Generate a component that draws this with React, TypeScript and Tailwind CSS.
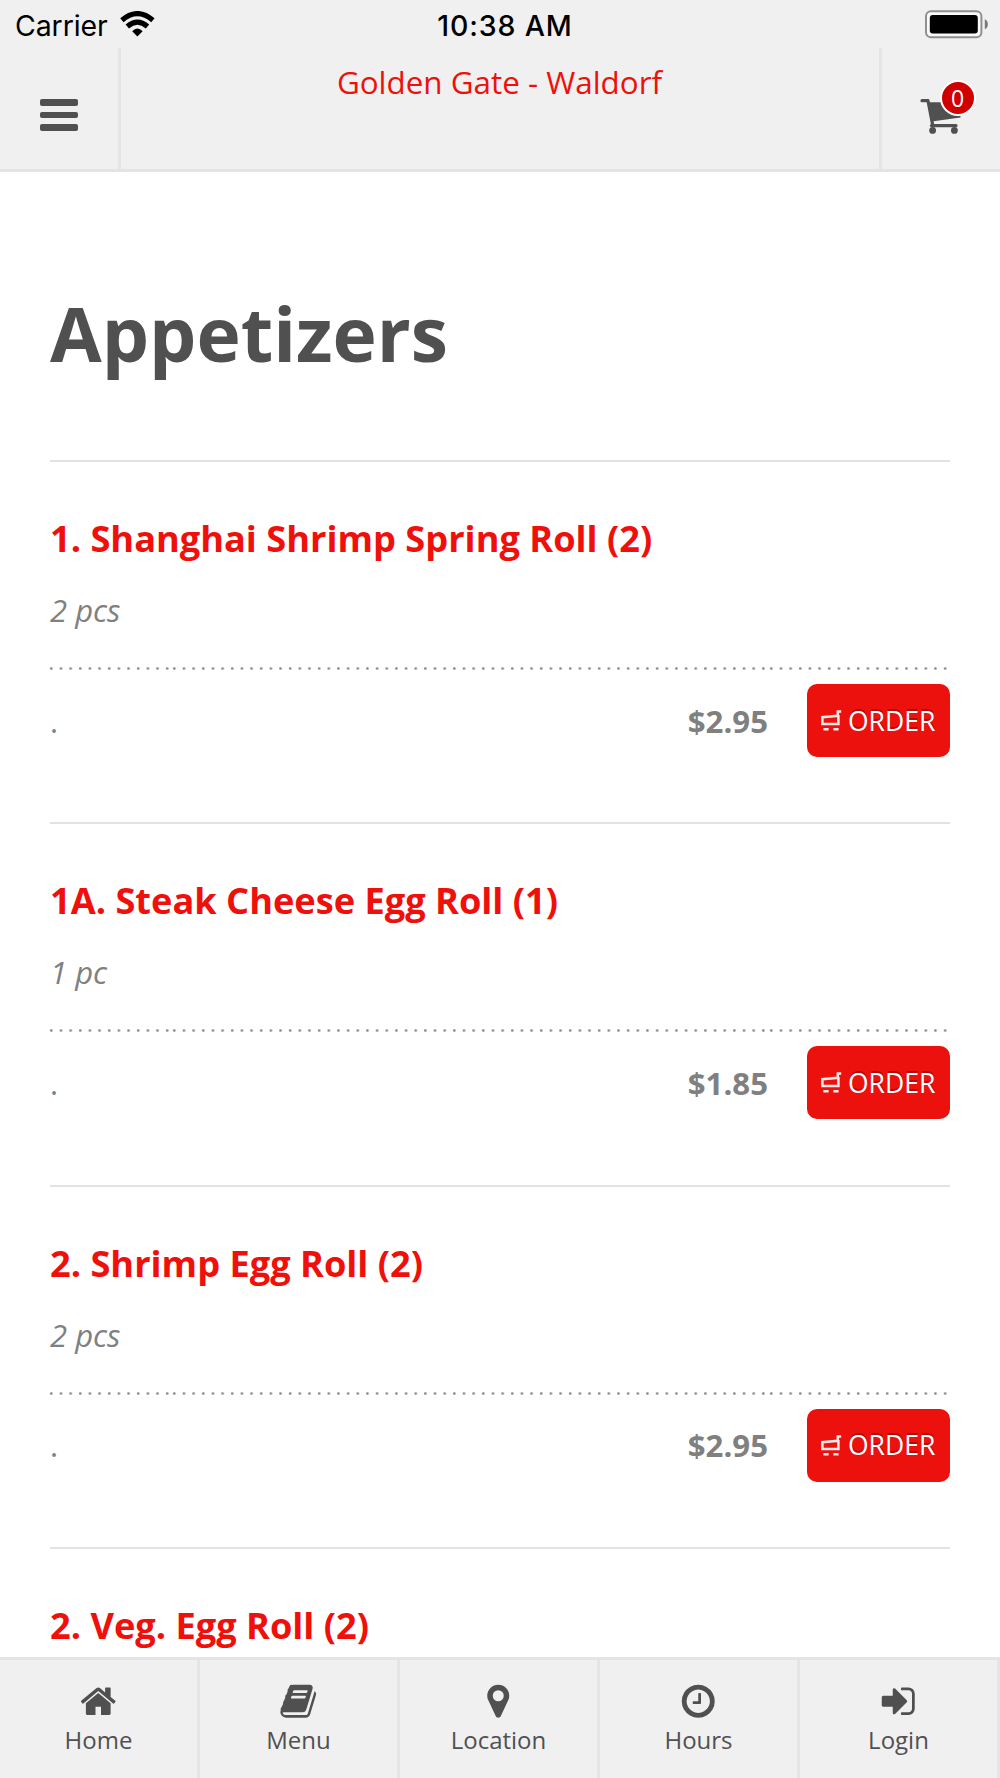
import React from "react";

const NAV = [
  { label: "Home", d: "M1472 992v480q0 26-19 45t-45 19h-384v-384h-256v384h-384q-26 0-45-19t-19-45v-480q0-1 .5-3t.5-3l575-474 575 474q1 2 1 6zm223-69l-62 74q-8 9-21 11h-3q-13 0-21-7l-692-577-692 577q-12 8-24 7-13-2-21-11l-62-74q-8-10-7-23.5t11-21.5l719-599q32-26 76-26t76 26l244 204v-195q0-14 9-23t23-9h192q14 0 23 9t9 23v408l219 182q10 8 11 21.5t-7 23.5z" },
  { label: "Menu", d: "M1703 478q40 57 18 129l-275 906q-19 64-76.5 107.5t-122.5 43.5h-923q-77 0-148.5-53.5t-99.5-131.5q-24-67-2-127 0-4 3-27t4-37q1-8-3-21.5t-3-19.5q2-11 8-21t16.5-23.5 16.5-23.5q23-38 45-91.5t30-91.5q3-10 .5-30t-.5-28q3-11 17-28t17-23q21-36 42-92t25-90q1-9-2.5-32t.5-28q4-13 22-30.5t22-22.5q19-26 42.5-84.5t27.5-96.5q1-8-3-25.5t-2-26.5q2-8 9-18t18-23 17-21q8-12 16.5-30.5t15-35 16-36 19.5-32 26.5-23.5 36-11.5 47.5 5.5l-1 3q38-9 51-9h761q74 0 114 56t18 130l-274 906q-36 119-71.5 153.5t-128.5 34.5h-869q-27 0-38 15-11 16-1 43 24 70 144 70h923q29 0 56-15.5t35-41.5l300-987q7-22 5-57 38 15 59 43zm-1064 2q-4 13 2 22.5t20 9.5h608q13 0 25.5-9.5t16.5-22.5l21-64q4-13-2-22.5t-20-9.5h-608q-13 0-25.5 9.5t-16.5 22.5zm-83 256q-4 13 2 22.5t20 9.5h608q13 0 25.5-9.5t16.5-22.5l21-64q4-13-2-22.5t-20-9.5h-608q-13 0-25.5 9.5t-16.5 22.5z" },
  { label: "Location", d: "M1152 640q0-106-75-181t-181-75-181 75-75 181 75 181 181 75 181-75 75-181zm256 0q0 109-33 179l-364 774q-16 33-47.5 52t-67.5 19-67.5-19-46.5-52l-365-774q-33-70-33-179 0-212 150-362t362-150 362 150 150 362z" },
  { label: "Hours", d: "M1024 544v448q0 14-9 23t-23 9h-320q-14 0-23-9t-9-23v-64q0-14 9-23t23-9h224v-352q0-14 9-23t23-9h64q14 0 23 9t9 23zm416 352q0-148-73-273t-198-198-273-73-273 73-198 198-73 273 73 273 198 198 273 73 273-73 198-198 73-273zm224 0q0 209-103 385.5t-279.5 279.5-385.5 103-385.5-103-279.5-279.5-103-385.5 103-385.5 279.5-279.5 385.5-103 385.5 103 279.5 279.5 103 385.5z" },
  { label: "Login", d: "M1312 896q0 26-19 45l-544 544q-19 19-45 19t-45-19-19-45v-288h-448q-26 0-45-19t-19-45v-384q0-26 19-45t45-19h448v-288q0-26 19-45t45-19 45 19l544 544q19 19 19 45zm352-352v704q0 119-84.5 203.5t-203.5 84.5h-320q-13 0-22.5-9.5t-9.5-22.5q0-4-1-20t-.5-26.5 3-23.5 10-19.5 20.5-6.5h320q66 0 113-47t47-113v-704q0-66-47-113t-113-47h-312l-11.5-1-11.5-3-8-5.5-7-9-2-13.5q0-4-1-20t-.5-26.5 3-23.5 10-19.5 20.5-6.5h320q119 0 203.5 84.5t84.5 203.5z" },
];

type Item = { name: string; note?: string; price?: string };

const ITEMS: Item[] = [
  { name: "1. Shanghai Shrimp Spring Roll (2)", note: "2 pcs", price: "$2.95" },
  { name: "1A. Steak Cheese Egg Roll (1)", note: "1 pc", price: "$1.85" },
  { name: "2. Shrimp Egg Roll (2)", note: "2 pcs", price: "$2.95" },
  { name: "2. Veg. Egg Roll (2)" },
];

function StatusBar() {
  return (
    <div className="grid h-12 grid-cols-3 text-black font-['Inter',sans-serif]">
      <div className="flex pl-[15px] pt-[8px]">
        <span className="text-[28.5px] leading-9 tracking-[-0.1px]">Carrier</span>
        <svg className="ml-[12px] mt-[3px] h-[26px] w-[36px]" viewBox="0 0 36 26" fill="none">
          <path d="M1.9 9.3 Q17.4 -4 32.9 9.3" stroke="#000" strokeWidth="5.2" />
          <path d="M7.3 15.4 Q17.4 6.8 27.5 15.4" stroke="#000" strokeWidth="5.2" />
          <path d="M12.2 20.2 Q17.4 15 22.6 20.2 L17.4 25.4Z" fill="#000" />
        </svg>
      </div>
      <div className="pl-[10px] pt-[8px] text-center">
        <span className="text-[28.5px] font-medium leading-9 tracking-[0.85px]">10:38 AM</span>
      </div>
      <div className="flex justify-end pr-[11px] pt-[10px]">
        <svg className="h-[29px] w-[64px]" viewBox="0 0 64 29">
          <rect x="1" y="1.2" width="55.4" height="26" rx="5" fill="#fff" fillOpacity=".6" stroke="#8f8f8f" strokeWidth="2" />
          <rect x="4.8" y="5" width="48" height="18.4" rx="3" fill="#000" />
          <path d="M59.8 9.2 q3 1.4 3 5 t-3 5z" fill="#777" />
        </svg>
      </div>
    </div>
  );
}

function Header() {
  return (
    <header className="h-[172px] shrink-0 border-b-[3px] border-[#e4e4e4] bg-[#f0f0f0]">
      <StatusBar />
      <div className="flex h-[121px]">
        <div className="flex w-[121px] flex-col border-r-[3px] border-[#e5e5e5] pl-10 pt-[51px]">
          <div className="mb-[6px] h-[6.6px] w-[38px] rounded-[2px] bg-[#505050]" />
          <div className="mb-[6px] h-[6.6px] w-[38px] rounded-[2px] bg-[#505050]" />
          <div className="h-[6.6px] w-[38px] rounded-[2px] bg-[#505050]" />
        </div>
        <div className="flex-1 pr-[1px] pt-[14px] text-center text-[31.4px] leading-10 text-[#ef100c]">Golden Gate - Waldorf</div>
        <div className="relative w-[121px] border-l-[3px] border-[#e5e5e5] pl-[38px] pt-[51px]">
          <svg className="h-[36px] w-[42px]" viewBox="0 0 42 36">
            <path d="M2 1.7 H8 L12.6 25.6" fill="none" stroke="#505050" strokeWidth="3.2" strokeLinecap="round" strokeLinejoin="round" />
            <path d="M7.6 3.2 H40.5 V18.6 L11.8 22.4Z" fill="#505050" />
            <path d="M11.5 26.6 H36" stroke="#505050" strokeWidth="3.2" strokeLinecap="round" />
            <circle cx="12.6" cy="31.4" r="3.4" fill="#505050" />
            <circle cx="34.4" cy="31.4" r="3.4" fill="#505050" />
          </svg>
          <span className="absolute left-[57.7px] top-[32px] flex size-[36px] items-center justify-center rounded-full border-2 border-white bg-[#d00000] text-[23px] leading-none text-white">0</span>
        </div>
      </div>
    </header>
  );
}

function Dots() {
  const segments = [122.5, 597, 178];
  return (
    <div className="flex h-[3px]">
      {segments.map((w) => (
        <div
          key={w}
          className="h-[3px] shrink-0 bg-[radial-gradient(circle_at_1.3px_1.5px,#8c8c8c_0.8px,transparent_1.8px)] bg-[length:9.667px_3px] bg-repeat-x"
          style={{ width: w }}
        />
      ))}
    </div>
  );
}

function OrderButton() {
  return (
    <button className="flex h-[73px] w-[143px] items-center rounded-[10px] bg-[#ed110d] pl-[14px] text-white">
      <svg className="h-[21px] w-[21px]" viewBox="0 0 21 21" fill="none">
        <path d="M20.2 1.5H16.8V5.8L1.4 7.2V14H17.4V5" stroke="#ffe9e8" strokeWidth="2.5" />
        <path d="M2.4 19.2H7.6M12.4 19.2H17.6" stroke="#ffe9e8" strokeWidth="2.6" />
      </svg>
      <span className="ml-[6px] text-[26.5px] leading-9 [text-shadow:0_-2px_0_rgba(0,0,0,0.25)]">ORDER</span>
    </button>
  );
}

export default function App() {
  return (
    <div className="flex h-[1778px] w-[1000px] flex-col overflow-hidden bg-white font-['Open_Sans',sans-serif]">
      <Header />
      <main className="min-h-0 flex-1 overflow-hidden px-[50px]">
        <h1 className="mt-[121px] h-[167px] text-[74.9px] font-bold leading-[80px] text-[#505050]">Appetizers</h1>
        {ITEMS.map((it) => (
          <section key={it.name} className="h-[362.33px] border-t-2 border-[#e2e2e2] pt-[52px]">
            <h2 className="text-[36.2px] font-bold leading-[48px] text-[#ef100c]">{it.name}</h2>
            {it.note && (
              <>
                <p className="mt-[28px] text-[31px] italic leading-10 text-[#808080]">{it.note}</p>
                <div className="mt-[37px]"><Dots /></div>
                <div className="mt-[14px] flex h-[73px] items-center text-[#808080]">
                  <span className="text-[30.67px] leading-10">.</span>
                  <span className="ml-auto mr-[39px] text-[31.2px] font-bold leading-10">{it.price}</span>
                  <OrderButton />
                </div>
              </>
            )}
          </section>
        ))}
      </main>
      <nav className="grid h-[121px] shrink-0 grid-cols-5 border-t-[3px] border-[#e4e4e4] bg-[#f0f0f0] text-[#505050]">
        {NAV.map((n) => (
          <div key={n.label} className="flex flex-col items-center border-r-[3px] border-[#e5e5e5] pt-[22px]">
            <svg className="size-[38.5px]" viewBox="0 0 1792 1792" fill="currentColor"><path d={n.d} /></svg>
            <span className="mt-[4px] text-[24px] leading-[30px]">{n.label}</span>
          </div>
        ))}
      </nav>
    </div>
  );
}
